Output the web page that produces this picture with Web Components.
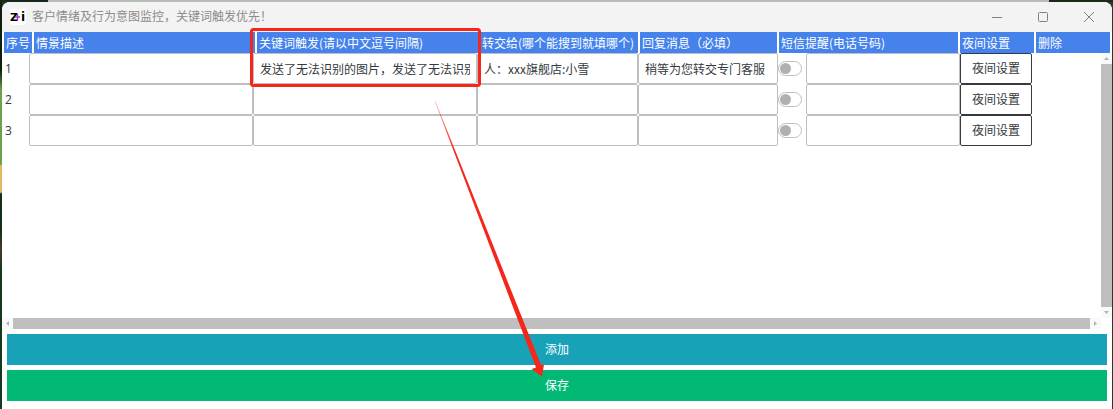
<!DOCTYPE html>
<html lang="zh-CN">
<head>
<meta charset="utf-8">
<title>客户情绪及行为意图监控</title>
<style>
    body {
        margin: 0;
        font: 12px/16px "Noto Sans CJK SC", "Noto Sans", sans-serif;
        color: #343a40;
        background:
            linear-gradient(90deg, #16281a 48px, #b9bdb9 48px calc(100% - 64px), #1c2a1a calc(100% - 64px)) 0 0 / 100% 2px no-repeat,
            linear-gradient(#10200f 70px, #6fa050 90px 164px, #e2b860 166px 192px, #12301c 194px 230px, #4a3a28 250px, #143820 270px) 0 0 / 2px 100% no-repeat,
            #2c3a2c;
    }
</style>
</head>
<body>
<app-window>
    <title-bar slot="title">客户情绪及行为意图监控，关键词触发优先！</title-bar>
    <rule-table></rule-table>
    <action-button slot="actions" kind="info">添加</action-button>
    <action-button slot="actions" kind="success">保存</action-button>
    <guide-marks slot="overlay"></guide-marks>
</app-window>

<script>
class BaseElement extends HTMLElement {
    constructor() {
        super();
        const template = document.createElement("template");

        this.attachShadow({ mode: "open" });
        template.innerHTML = this.markup();
        this.shadowRoot.appendChild(template.content.cloneNode(true));
    }

    markup() {
        return "<slot></slot>";
    }
}

class AppWindow extends BaseElement {
    markup() {
        return `
        <style>
            :host {
                display: block;
                position: relative;
                padding: 2px 1px 0 2px;
            }

            .window {
                display: flex;
                flex-direction: column;
                min-height: calc(100vh - 2px);
                border-radius: 8px 8px 0 0;
                overflow: hidden;
                background: #fff;
            }

            .window__content {
                display: flex;
                flex: 1;
            }

            .window__actions {
                display: flex;
                flex-direction: column;
                gap: 5px;
                padding: 5px 5px 8px;
            }
        </style>

        <div class="window">
            <slot name="title"></slot>
            <div class="window__content"><slot></slot></div>
            <div class="window__actions"><slot name="actions"></slot></div>
        </div>
        <slot name="overlay"></slot>`;
    }
}

class TitleBar extends BaseElement {
    markup() {
        return `
        <style>
            :host {
                display: flex;
                align-items: center;
                height: 30px;
                padding-left: 8px;
                background: #f3f3f3;
                color: #8c8c8c;
            }

            .logo {
                width: 16px;
                height: 16px;
                margin-right: 6px;
            }

            .logo text {
                font: bold 12px "DejaVu Sans", sans-serif;
            }

            .title {
                flex: 1;
                padding-bottom: 2px;
                white-space: nowrap;
            }

            button {
                display: grid;
                place-items: center;
                width: 46px;
                height: 30px;
                padding: 0;
                border: 0;
                background: none;
                color: #808080;
            }
        </style>

        <svg class="logo" viewBox="0 0 16 16">
            <rect width="16" height="16" rx="3" fill="#fff"/>
            <text x="0" y="12" fill="#000" style="font-size: 11px">Z</text>
            <path d="M5 8h5M7.500 5v6" stroke="#a33bc4" stroke-width="1.500"/>
            <text x="11" y="12" fill="#000">i</text>
        </svg>
        <span class="title"><slot></slot></span>
        <button type="button" aria-label="最小化">
            <svg width="10" height="10" fill="none" stroke="currentColor"><path d="M0 5.5h10"/></svg>
        </button>
        <button type="button" aria-label="最大化">
            <svg width="10" height="10" fill="none" stroke="currentColor"><rect x=".5" y=".5" width="9" height="9" rx="1"/></svg>
        </button>
        <button type="button" aria-label="关闭">
            <svg width="10" height="10" fill="none" stroke="currentColor"><path d="M0 0l10 10M10 0L0 10"/></svg>
        </button>`;
    }
}

class TextField extends BaseElement {
    markup() {
        return `
        <style>
            :host {
                display: block;
                flex: 1;
                min-width: 0;
            }

            input {
                display: block;
                box-sizing: border-box;
                width: 100%;
                height: 31px;
                padding: 0 6px;
                border: 1px solid #bfbfbf;
                border-radius: 2px;
                outline: 0;
                background: #fff;
                color: inherit;
                font: inherit;
            }
        </style>

        <input type="text">`;
    }

    connectedCallback() {
        this.input.value = this.getAttribute("value") || "";
        this.input.setAttribute("aria-label", this.getAttribute("label"));
    }

    get input() {
        return this.shadowRoot.querySelector("input");
    }
}

class ToggleSwitch extends BaseElement {
    markup() {
        return `
        <style>
            :host {
                display: block;
                width: 28px;
            }

            input {
                appearance: none;
                display: flex;
                align-items: center;
                box-sizing: border-box;
                width: 24px;
                height: 15px;
                margin: 0;
                padding: 0 1px;
                border: 1px solid #bfbfbf;
                border-radius: 8px;
            }

            input::before {
                content: "";
                width: 11px;
                height: 11px;
                border-radius: 50%;
                background: #adb1b4;
            }

            input:checked {
                justify-content: flex-end;
            }

            input:checked::before {
                background: #4582ec;
            }
        </style>

        <input type="checkbox" role="switch" aria-label="短信提醒">`;
    }
}

class ActionButton extends BaseElement {
    markup() {
        return `
        <style>
            :host {
                display: block;
            }

            button {
                display: block;
                box-sizing: border-box;
                width: 100%;
                height: 31px;
                padding: 0 0 2px;
                border: 1px solid #343a40;
                border-radius: 2px;
                background: #fff;
                color: #343a40;
                font: inherit;
            }

            :host([kind]) button {
                border: 0;
                border-radius: 0;
                color: #fff;
            }

            :host([kind="info"]) button {
                background: #17a2b8;
            }

            :host([kind="success"]) button {
                background: #02b875;
            }
        </style>

        <button type="button"><slot></slot></button>`;
    }
}

class ScrollTrack extends BaseElement {
    markup() {
        return `
        <style>
            :host {
                display: flex;
                background: #f8f9fa;
            }

            :host([vertical]) {
                flex-direction: column;
            }

            .arrow {
                display: grid;
                place-items: center;
                width: 11px;
                height: 11px;
            }

            .thumb {
                flex: 1;
                background: #bfbfbf;
            }

            svg {
                fill: #b4b4b4;
            }

            :host([vertical]) svg {
                transform: rotate(90deg);
            }
        </style>

        <span class="arrow"><svg width="5" height="5"><path d="M4 0v5L1 2.5z"/></svg></span>
        <span class="thumb"></span>
        <span class="arrow"><svg width="5" height="5"><path d="M1 0v5l3-2.5z"/></svg></span>`;
    }
}

class RuleTable extends BaseElement {
    markup() {
        const heads = ["序号", "情景描述", "关键词触发(请以中文逗号间隔)", "转交给(哪个能搜到就填哪个)",
            "回复消息（必填）", "短信提醒(电话号码)", "夜间设置", "删除"];
        const rows = [
            ["", "发送了无法识别的图片，发送了无法识别的消息", "人：xxx旗舰店:小雪", "稍等为您转交专门客服"],
            ["", "", "", ""],
            ["", "", "", ""]
        ];

        return `
        <style>
            :host {
                display: grid;
                flex: 1;
                grid-template-columns: minmax(0, 1fr) 11px;
                grid-template-rows: 21px 1fr 11px;
            }

            table {
                display: block;
                grid-area: 1 / 1 / 3 / 3;
                margin: 0 2px;
            }

            thead, tbody {
                display: block;
            }

            tr {
                display: grid;
            }

            thead tr {
                grid-template-columns:
                    30px minmax(0, 223fr) minmax(0, 223fr) minmax(0, 160fr)
                    minmax(0, 139fr) minmax(0, 181fr) 76px 74px;
            }

            tbody tr {
                grid-template-columns:
                    25px minmax(0, 224fr) minmax(0, 224fr) minmax(0, 161fr)
                    minmax(0, 140fr) minmax(0, 182fr) 72px 78px;
            }

            th {
                height: 21px;
                padding: 0 2px;
                border-right: 2px solid #fff;
                background: #4582ec;
                color: #fff;
                font-weight: normal;
                line-height: 21px;
                text-align: left;
                white-space: nowrap;
                overflow: hidden;
            }

            th:last-child {
                border-right: 0;
            }

            td {
                display: flex;
                align-items: center;
                padding: 0;
            }

            .index {
                padding-left: 1px;
                font-family: "Open Sans", sans-serif;
            }

            action-button {
                flex: 1;
            }

            .right {
                grid-area: 2 / 2;
            }

            .bottom {
                grid-area: 3 / 1;
            }
        </style>

        <table>
            <thead>
                <tr>${heads.map(head => `<th scope="col">${head}</th>`).join("")}</tr>
            </thead>
            <tbody>
                ${rows.map((row, i) => `
                <tr>
                    <td class="index">${i + 1}</td>
                    ${row.map((value, j) => `<td><text-field label="${heads[j + 1]}" value="${value}"></text-field></td>`).join("")}
                    <td><toggle-switch></toggle-switch><text-field label="电话号码"></text-field></td>
                    <td><action-button>夜间设置</action-button></td>
                    <td></td>
                </tr>`).join("")}
            </tbody>
        </table>
        <scroll-track class="right" vertical></scroll-track>
        <scroll-track class="bottom"></scroll-track>`;
    }
}

// Red frame round the keyword column and an arrow down to the save button
class GuideMarks extends BaseElement {
    markup() {
        return `
        <style>
            :host {
                position: absolute;
                top: 0;
                left: 0;
                pointer-events: none;
            }

            svg {
                display: block;
            }
        </style>

        <svg width="560" height="390" aria-hidden="true">
            <defs>
                <linearGradient id="fade" gradientUnits="userSpaceOnUse" x1="435" y1="101" x2="455" y2="151">
                    <stop offset="0" stop-color="#f5271b" stop-opacity=".3"/>
                    <stop offset="1" stop-color="#f5271b"/>
                </linearGradient>
            </defs>
            <rect x="251.5" y="29.5" width="228" height="56" rx="2" fill="none" stroke="#f5271b" stroke-width="3"/>
            <path d="M434.600 101L435.400 101L541 365L544 364.500L542 376.500L531.500 369L536 367.500Z" fill="url(#fade)"/>
        </svg>`;
    }
}

customElements.define("title-bar", TitleBar);
customElements.define("text-field", TextField);
customElements.define("toggle-switch", ToggleSwitch);
customElements.define("action-button", ActionButton);
customElements.define("scroll-track", ScrollTrack);
customElements.define("rule-table", RuleTable);
customElements.define("guide-marks", GuideMarks);
customElements.define("app-window", AppWindow);
</script>
</body>
</html>
